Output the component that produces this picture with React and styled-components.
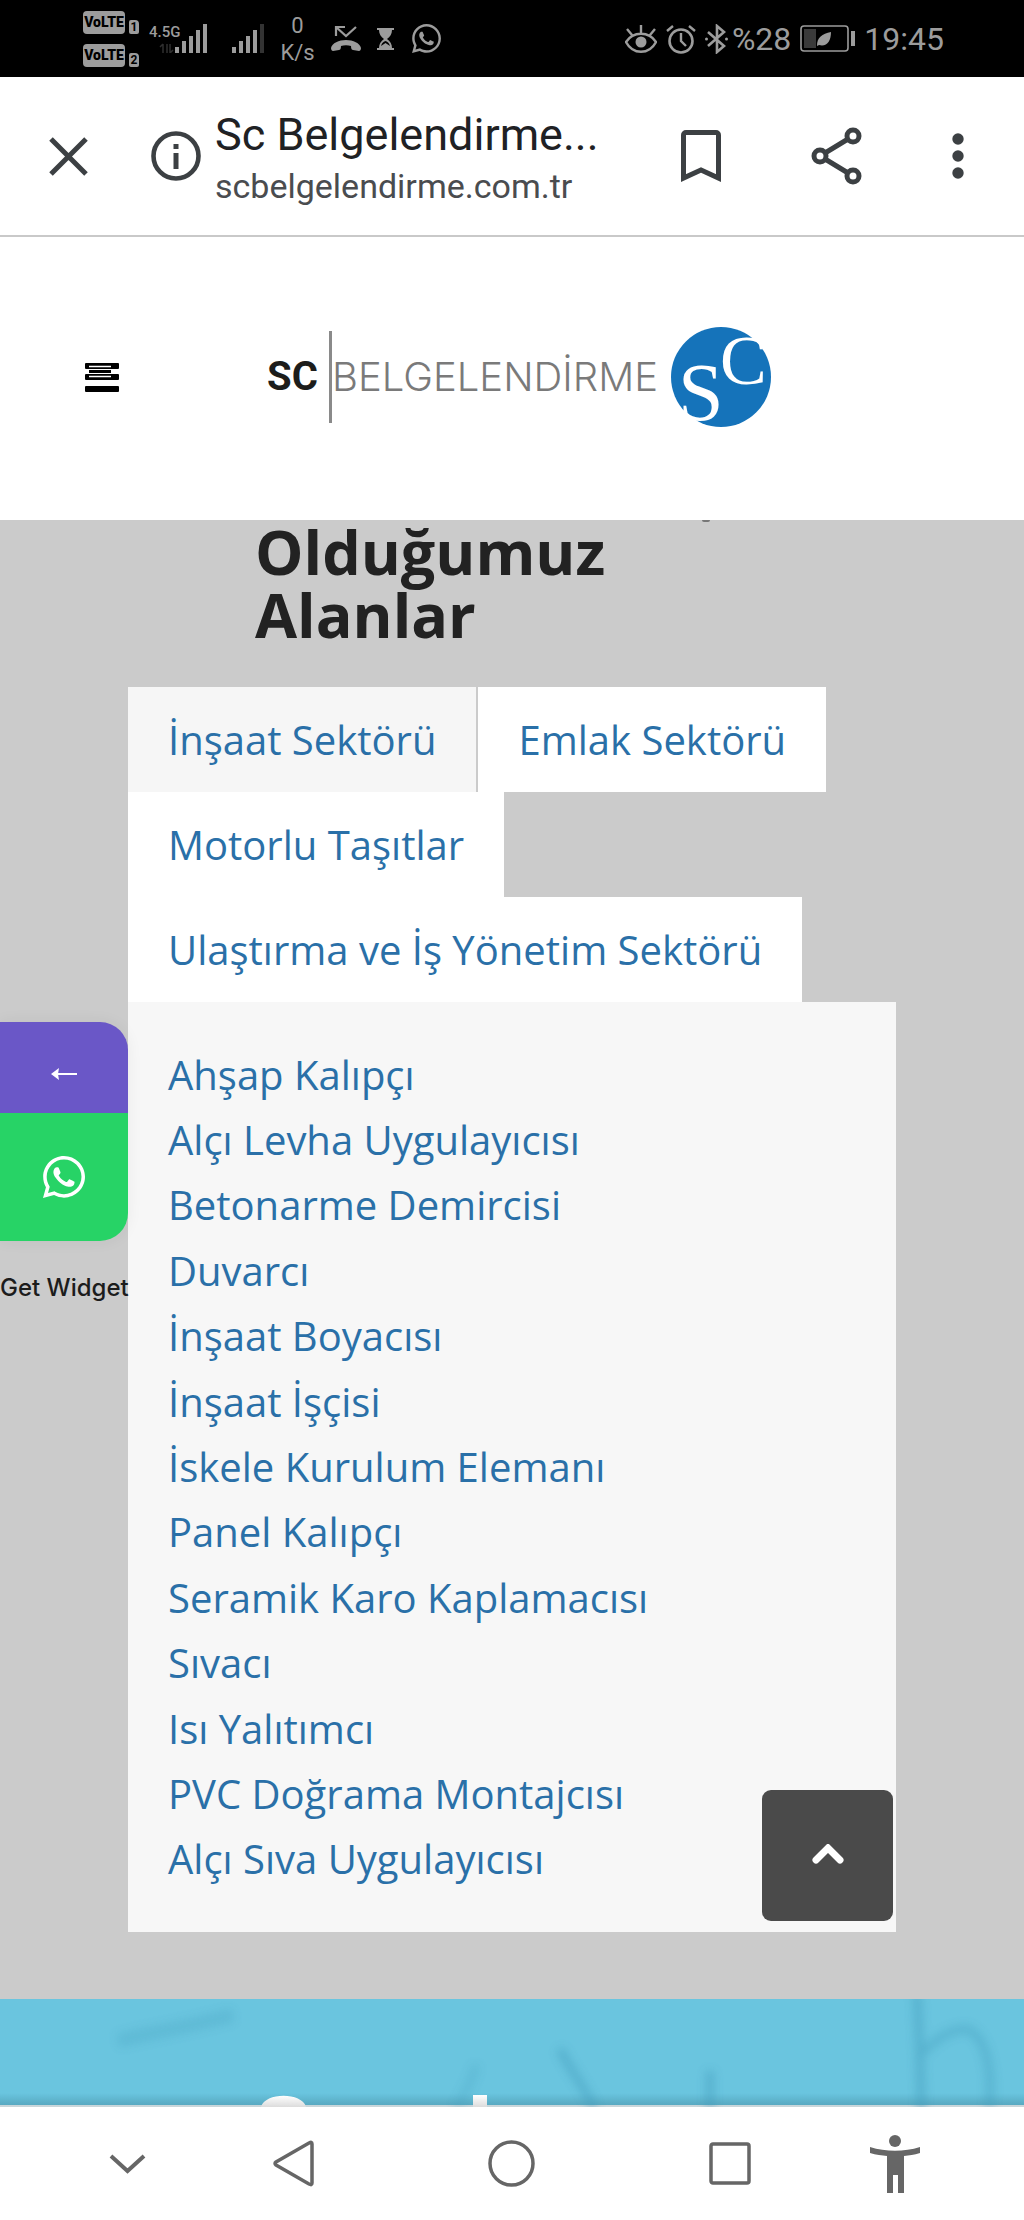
import React, { useState } from "react";
import styled, { createGlobalStyle } from "styled-components";
import { FaWhatsapp } from "react-icons/fa";

const GlobalStyle = createGlobalStyle`
  *, *::before, *::after { box-sizing: border-box; }
  body { margin: 0; background: #fff; font-family: "Open Sans", sans-serif; }
  button { padding: 0; border: 0; background: none; font: inherit; color: inherit; cursor: pointer; }
  svg { display: block; flex: none; }
`;

const Page = styled.div`
  position: relative;
  display: flex;
  flex-direction: column;
  overflow: hidden;
`;

/* ---------- phone status bar ---------- */

const StatusBar = styled.div`
  display: flex;
  align-items: center;
  justify-content: space-between;
  height: 77px;
  padding: 0 80px 0 83px;
  background: #000;
  color: #9c9c9c;
  font-family: Roboto, sans-serif;
`;

const StatusGroup = styled.div`
  display: flex;
  align-items: center;
  gap: ${(p) => p.$gap}px;
`;

const SimColumn = styled.div`
  display: flex;
  flex-direction: column;
  gap: 10px;
`;

const SimRow = styled.div`
  display: flex;
  align-items: flex-end;
  gap: 4px;
`;

const VolteTag = styled.span`
  width: 42px;
  border-radius: 4px;
  background: #9c9c9c;
  color: #000;
  font-size: 14px;
  font-weight: 900;
  line-height: 23px;
  text-align: center;
`;

const SimNumber = styled.span`
  width: 10px;
  border-radius: 2px 4px 2px 2px;
  background: #9c9c9c;
  color: #000;
  font-size: 12px;
  font-weight: 700;
  line-height: 14px;
  text-align: center;
`;

const Speed = styled.div`
  width: 35px;
  font-size: 22px;
  line-height: 27px;
  text-align: center;
`;

const StatusText = styled.span`
  font-size: 32px;
  line-height: 40px;
`;

/* ---------- browser toolbar ---------- */

const BrowserBar = styled.div`
  display: flex;
  align-items: center;
  height: 160px;
  padding: 0 60px 0 49px;
  border-bottom: 2px solid #c9c9c9;
  background: #fff;
  color: #3c4043;
  font-family: Roboto, sans-serif;
`;

const SiteInfo = styled.div`
  display: flex;
  flex: 1;
  align-items: center;
  gap: 14px;
  min-width: 0;
  margin-left: 63px;
`;

const PageNames = styled.div`
  padding-top: 6px;
`;

const PageTitle = styled.div`
  color: #202124;
  font-size: 45px;
  line-height: 54px;
  white-space: nowrap;
`;

const PageUrl = styled.div`
  color: #4a4c4f;
  font-size: 34px;
  line-height: 48px;
`;

const BrowserActions = styled.div`
  display: flex;
  align-items: center;
  gap: 90px;
`;

/* ---------- site header ---------- */

const SiteHeader = styled.header`
  display: flex;
  align-items: center;
  gap: 148px;
  height: 283px;
  padding: 0 0 3px 85px;
  background: #fff;
`;

const Logo = styled.a`
  display: flex;
  align-items: center;
  color: #1d1d1b;
  text-decoration: none;
`;

const LogoShort = styled.span`
  width: 62px;
  font-family: Roboto, sans-serif;
  font-size: 40px;
  font-weight: 700;
  line-height: 92px;
`;

const LogoName = styled.span`
  margin-right: 12px;
  border-left: 3px solid #8a8a8a;
  color: #7a7a7a;
  font-family: Inter, sans-serif;
  font-size: 40px;
  font-weight: 300;
  line-height: 92px;
`;

/* ---------- sectors ---------- */

const Sectors = styled.main`
  position: relative;
  display: flex;
  flex-direction: column;
  padding: 0 128px 67px;
  overflow: hidden;
  background: #cbcbcb;
`;

const Speck = styled.span`
  position: absolute;
  top: 0;
  left: 702px;
  width: 8px;
  height: 2px;
  border-radius: 0 0 4px 4px;
  background: #777;
`;

const Heading = styled.h2`
  margin: 0 0 41px 127px;
  color: #222;
  font-size: 61px;
  font-weight: 700;
  line-height: 63px;
`;

const Tabs = styled.div`
  display: flex;
  flex-wrap: wrap;
`;

const Tab = styled.button.attrs({ type: "button", role: "tab" })`
  && {
    padding: 0 40px;
    background: ${(p) => (p.$active ? "#f6f6f6" : "#fff")};
    border-right: ${(p) => (p.$active ? "2px solid #cbcbcb" : "0")};
    color: #2a70a8;
    font-size: 40px;
    line-height: 105px;
  }
`;

const Panel = styled.div`
  position: relative;
  padding: 40px;
  background: #f7f7f7;
`;

const JobList = styled.ul`
  display: grid;
  grid-auto-rows: 1fr;
  align-items: center;
  min-height: 850px;
  margin: 0;
  padding: 0;
  list-style: none;
`;

const JobLink = styled.a`
  color: #2a70a8;
  font-size: 40px;
  line-height: 60px;
  text-decoration: none;
`;

const ToTop = styled.button`
  && {
    position: absolute;
    right: 3px;
    bottom: 11px;
    display: grid;
    place-items: center;
    width: 131px;
    height: 131px;
    border-radius: 9px;
    background: #4a4a4a;
    color: #fff;
  }
`;

/* ---------- contact widget ---------- */

const Widget = styled.aside`
  position: absolute;
  top: 1022px;
  left: 0;
  width: 128px;
`;

const WidgetButtons = styled.div`
  display: flex;
  flex-direction: column;
  overflow: hidden;
  border-radius: 0 28px 28px 0;
  box-shadow: 0 0 16px rgba(0, 0, 0, 0.06);
`;

const WidgetButton = styled.button`
  && {
    display: grid;
    place-items: center;
    height: ${(p) => p.$height}px;
    padding-top: ${(p) => p.$top || 0}px;
    background: ${(p) => p.$color};
    color: #fff;
  }
`;

const WidgetLink = styled.a`
  display: block;
  margin-top: 30px;
  color: #1c1c1c;
  font-family: Inter, sans-serif;
  font-size: 24px;
  font-weight: 500;
  line-height: 34px;
  text-decoration: none;
  white-space: nowrap;
`;

/* ---------- banner and phone navigation ---------- */

const Banner = styled.section`
  height: 108px;
  overflow: hidden;
  background: linear-gradient(#6ac5df 94px, #58a9c1 106px, #c9d6da 106px);
`;

const NavBar = styled.nav`
  display: flex;
  align-items: center;
  justify-content: space-between;
  height: 113px;
  padding: 0 104px 0 109px;
  background: #fff;
  color: #666;
`;

const NavMain = styled.div`
  display: flex;
  align-items: center;
  gap: 174px;
  padding-left: 8px;
`;

/* ---------- drawings ---------- */

const stroke = (width, extra) => ({
  fill: "none",
  stroke: "currentColor",
  strokeWidth: width,
  ...extra,
});

const SignalBars = ({ x = 0, dim }) =>
  [6, 12, 17, 23, 29].map((h, i) => (
    <rect key={h} x={x + i * 7} y={29 - h} width="4" height={h} fill={dim && i === 4 ? "#333" : "currentColor"} />
  ));

const NetworkSignal = () => (
  <svg width="67" height="29" viewBox="0 0 67 29">
    <text x="0" y="13" fontSize="15" fontWeight="500" fill="currentColor">4.5G</text>
    <path d="M14 29V20M11 23l3-3M21 20v9M21 29l3-3M18 20v9" {...stroke(1.5)} opacity="0.3" />
    <SignalBars x={26} />
  </svg>
);

const SecondSignal = () => (
  <svg width="32" height="29" viewBox="0 0 32 29">
    <SignalBars dim />
  </svg>
);

const MissedCall = () => (
  <svg width="30" height="28" viewBox="0 0 30 28">
    <path d="M5 11V2h9M5 2l10 9L25 2" {...stroke(2.2)} />
    <path d="M0 23c1-5 8-8 15-8s14 3 15 8c0 2-1 3-2 3l-6-1c-1 0-2-1-2-4-3-1-7-1-10 0 0 3-1 4-2 4l-6 1c-1 0-2-1-2-3z" fill="currentColor" />
  </svg>
);

const Hourglass = () => (
  <svg width="17" height="22" viewBox="0 0 17 22">
    <path d="M0 0h17v2h-2c0 4-2 7-5 9 3 2 5 5 5 9h2v2H0v-2h2c0-4 2-7 5-9C4 9 2 6 2 2H0z" fill="currentColor" />
    <path d="M4 18c1-3 2-4 4.500-5 2.500 1 3.500 2 4.500 5l-4.500-3z" fill="#000" />
  </svg>
);

const EyeComfort = () => (
  <svg width="32" height="28" viewBox="0 0 32 28">
    <path d="M1 17C8 6 24 6 31 17 24 30 8 30 1 17zM16 8V0M7 10L2 4M25 10l5-6" {...stroke(2.4)} />
    <circle cx="16" cy="17" r="5.500" fill="currentColor" />
  </svg>
);

const Alarm = () => (
  <svg width="30" height="30" viewBox="0 0 30 30">
    <circle cx="15" cy="17" r="11.500" {...stroke(2.6)} />
    <path d="M15 9v8l5 5M1 7l6-5M29 7l-6-5" {...stroke(2.4)} />
  </svg>
);

const Bluetooth = () => (
  <svg width="23" height="30" viewBox="0 0 23 30">
    <path d="M3 8l16 14-7 6V2l7 6L3 22" {...stroke(2.6)} />
    <circle cx="1.500" cy="15" r="1.500" fill="currentColor" />
    <circle cx="21.500" cy="15" r="1.500" fill="currentColor" />
  </svg>
);

const Battery = () => (
  <svg width="55" height="27" viewBox="0 0 55 27">
    <rect x="1" y="1" width="47" height="25" rx="3" {...stroke(1.6)} />
    <rect x="4" y="4" width="12" height="19" fill="#3a3a3a" />
    <path d="M17 21c0-9 5-12 14-14 0 9-4 15-12 13z" fill="currentColor" />
    <rect x="51" y="6" width="4" height="15" fill="currentColor" />
  </svg>
);

const CloseIcon = () => (
  <svg width="39" height="39" viewBox="0 0 39 39">
    <path d="M2 2l35 35M37 2L2 37" {...stroke(5)} />
  </svg>
);

const InfoIcon = () => (
  <svg width="50" height="50" viewBox="0 0 50 50">
    <circle cx="25" cy="25" r="22.500" {...stroke(4.6)} />
    <path d="M25 22v16M25 13v5" {...stroke(5)} />
  </svg>
);

const BookmarkIcon = () => (
  <svg width="40" height="52" viewBox="0 0 40 52">
    <path d="M2.500 48V5a2.500 2.500 0 0 1 2.500-2.500h30A2.500 2.500 0 0 1 37.500 5v43L20 40z" {...stroke(5)} />
  </svg>
);

const ShareIcon = () => (
  <svg width="51" height="58" viewBox="0 0 51 58">
    <path d="M42 9L9 29l33 20" {...stroke(5)} />
    {[[42, 9], [9, 29], [42, 49]].map(([x, y]) => (
      <circle key={`${x}-${y}`} cx={x} cy={y} r="6" {...stroke(5, { fill: "#fff" })} />
    ))}
  </svg>
);

const MoreIcon = () => (
  <svg width="12" height="46" viewBox="0 0 12 46">
    {[6, 23, 40].map((y) => <circle key={y} cx="6" cy={y} r="5.700" fill="currentColor" />)}
  </svg>
);

const MenuIcon = () => (
  <svg width="34" height="29" viewBox="0 0 34 29">
    {[0, 11, 23].map((y) => <rect key={y} y={y} width="34" height="6" rx="1" fill="#000" />)}
    <path d="M4 3.500h22M4 13.500h22" stroke="#fff" strokeWidth="1.500" />
    <path d="M4 8.500h22" stroke="#000" strokeWidth="3" />
  </svg>
);

const LogoMark = () => (
  <svg width="102" height="102" viewBox="0 0 102 102">
    <circle cx="51" cy="51" r="50" fill="#1573ba" />
    <g fill="#fff" fontFamily="Liberation Serif, serif">
      <text x="8" y="94" fontSize="82">S</text>
      <text x="50" y="58" fontSize="70">C</text>
    </g>
  </svg>
);

const BannerArt = () => (
  <svg width="100%" height="108" viewBox="0 0 1024 108" preserveAspectRatio="xMidYMid slice">
    <defs>
      <filter id="soft" x="-20%" y="-50%" width="140%" height="200%">
        <feGaussianBlur stdDeviation="5" />
      </filter>
      <linearGradient id="fade" x1="0" y1="0" x2="0" y2="1">
        <stop offset="0" stopColor="#fff" />
        <stop offset="1" stopColor="#dcdcdc" />
      </linearGradient>
    </defs>
    <g filter="url(#soft)" fill="none" stroke="#3c97b8" strokeWidth="8" opacity="0.45">
      <path d="M118 42c30-8 70-14 115-26" strokeWidth="14" opacity="0.5" />
      <path d="M476 66c-4 16-12 30-20 44" opacity="0.5" />
      <path d="M560 50c10 22 24 36 34 60" />
      <path d="M710 72v38" />
      <path d="M917-6c2 40 4 80 4 120" />
      <path d="M923 54c12-14 28-24 44-24 20 8 26 44 22 80" opacity="0.8" />
    </g>
    <path d="M261 108c4-15 41-15 45 0z" fill="url(#fade)" />
    <rect x="473" y="96" width="14" height="12" fill="url(#fade)" />
  </svg>
);

const PersonIcon = () => (
  <svg width="50" height="58" viewBox="0 0 50 58">
    <circle cx="25" cy="6" r="6" fill="currentColor" />
    <path d="M0 12c16 5 34 5 50 0v6c-6 2-11 2-16 3v37h-6V40h-5v18h-6V21c-5-1-11-1-17-3z" fill="currentColor" />
  </svg>
);

/* ---------- content ---------- */

const SECTORS = [
  "İnşaat Sektörü",
  "Emlak Sektörü",
  "Motorlu Taşıtlar",
  "Ulaştırma ve İş Yönetim Sektörü",
];

const JOBS = [
  "Ahşap Kalıpçı",
  "Alçı Levha Uygulayıcısı",
  "Betonarme Demircisi",
  "Duvarcı",
  "İnşaat Boyacısı",
  "İnşaat İşçisi",
  "İskele Kurulum Elemanı",
  "Panel Kalıpçı",
  "Seramik Karo Kaplamacısı",
  "Sıvacı",
  "Isı Yalıtımcı",
  "PVC Doğrama Montajcısı",
  "Alçı Sıva Uygulayıcısı",
];

export default function App() {
  const [active, setActive] = useState(0);

  return (
    <Page lang="tr">
      <GlobalStyle />

      <StatusBar>
        <StatusGroup $gap={16}>
          <StatusGroup $gap={10}>
            <SimColumn>
              {[1, 2].map((n) => (
                <SimRow key={n}>
                  <VolteTag>VoLTE</VolteTag>
                  <SimNumber>{n}</SimNumber>
                </SimRow>
              ))}
            </SimColumn>
            <NetworkSignal />
          </StatusGroup>
          <SecondSignal />
          <Speed>0<br />K/s</Speed>
          <MissedCall />
          <Hourglass />
          <FaWhatsapp size={33} />
        </StatusGroup>
        <StatusGroup $gap={9}>
          <EyeComfort />
          <Alarm />
          <StatusGroup $gap={4}>
            <Bluetooth />
            <StatusText>%28</StatusText>
          </StatusGroup>
          <Battery />
          <StatusText>19:45</StatusText>
        </StatusGroup>
      </StatusBar>

      <BrowserBar>
        <button type="button" aria-label="Kapat"><CloseIcon /></button>
        <SiteInfo>
          <InfoIcon />
          <PageNames>
            <PageTitle>Sc Belgelendirme...</PageTitle>
            <PageUrl>scbelgelendirme.com.tr</PageUrl>
          </PageNames>
        </SiteInfo>
        <BrowserActions>
          <button type="button" aria-label="Yer işareti"><BookmarkIcon /></button>
          <button type="button" aria-label="Paylaş"><ShareIcon /></button>
          <button type="button" aria-label="Diğer"><MoreIcon /></button>
        </BrowserActions>
      </BrowserBar>

      <SiteHeader>
        <button type="button" aria-label="Menü"><MenuIcon /></button>
        <Logo href="#">
          <LogoShort>SC</LogoShort>
          <LogoName>BELGELENDİRME</LogoName>
          <LogoMark />
        </Logo>
      </SiteHeader>

      <Sectors>
        <Speck />
        <Heading>Olduğumuz<br />Alanlar</Heading>
        <Tabs role="tablist">
          {SECTORS.map((name, i) => (
            <Tab key={name} $active={i === active} aria-selected={i === active} onClick={() => setActive(i)}>
              {name}
            </Tab>
          ))}
        </Tabs>
        <Panel role="tabpanel">
          <JobList>
            {JOBS.map((job) => (
              <li key={job}><JobLink href="#">{job}</JobLink></li>
            ))}
          </JobList>
          <ToTop type="button" aria-label="Yukarı çık">
            <svg width="32" height="24" viewBox="0 0 32 24">
              <path d="M4 16L16 4l12 12" {...stroke(7, { strokeLinecap: "round" })} />
            </svg>
          </ToTop>
        </Panel>
      </Sectors>

      <Banner><BannerArt /></Banner>

      <NavBar>
        <button type="button" aria-label="Gizle">
          <svg width="37" height="20" viewBox="0 0 37 20">
            <path d="M2 2l16.500 15L35 2" {...stroke(4)} />
          </svg>
        </button>
        <NavMain>
          <button type="button" aria-label="Geri">
            <svg width="41" height="47" viewBox="0 0 41 47">
              <path d="M39 4v39c0 2-1 2-3 1L3 25q-2-1.500 0-3L36 3c2-1 3-1 3 1z" {...stroke(3.5)} />
            </svg>
          </button>
          <button type="button" aria-label="Ana ekran">
            <svg width="47" height="47" viewBox="0 0 47 47">
              <circle cx="23.500" cy="23.500" r="21.500" {...stroke(3.5)} />
            </svg>
          </button>
          <button type="button" aria-label="Son uygulamalar">
            <svg width="42" height="43" viewBox="0 0 42 43">
              <rect x="2" y="2" width="38" height="39" rx="2" {...stroke(3.5)} />
            </svg>
          </button>
        </NavMain>
        <button type="button" aria-label="Erişilebilirlik"><PersonIcon /></button>
      </NavBar>

      <Widget>
        <WidgetButtons>
          <WidgetButton type="button" aria-label="Kapat" $height={91} $top={12} $color="#6a57c7">
            <svg width="26" height="12" viewBox="0 0 26 12">
              <path d="M2 6h24" {...stroke(2)} />
              <path d="M0 6l8-6-1 6 1 6z" fill="currentColor" />
            </svg>
          </WidgetButton>
          <WidgetButton type="button" aria-label="WhatsApp" $height={128} $color="#27d366">
            <FaWhatsapp size={48} />
          </WidgetButton>
        </WidgetButtons>
        <WidgetLink href="#">Get Widget</WidgetLink>
      </Widget>
    </Page>
  );
}
